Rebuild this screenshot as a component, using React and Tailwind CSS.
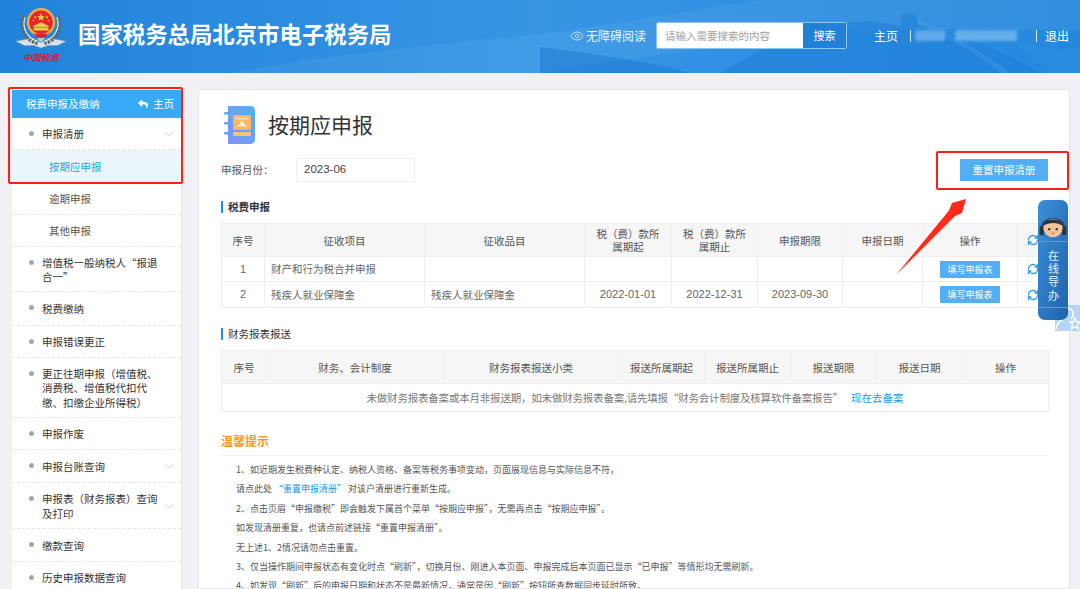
import React from "react";
import { ChevronDown, Eye, RefreshCw } from "lucide-react";
import { FaReply } from "react-icons/fa";

const latin = "font-['Liberation_Sans',sans-serif]";
const LP = "\uFF08";
const RP = "\uFF09";
const CM = "\uFF0C";

function Emblem() {
  return (
    <svg viewBox="0 0 60 50" className="w-[50px] h-[42px] block" aria-hidden="true">
      <path d="M0 41 L20 37 L30 43 L40 37 L60 41 L50 46 L38 46 L30 49 L22 46 L10 46 Z" fill="#dbe4ea" stroke="#8fa3b0" strokeWidth="0.6" />
      <path d="M10 11 A23 23 0 0 0 26 43" fill="none" stroke="#5d6a6c" strokeWidth="5" strokeDasharray="3 1.2" />
      <path d="M50 11 A23 23 0 0 1 34 43" fill="none" stroke="#5d6a6c" strokeWidth="5" strokeDasharray="3 1.2" />
      <path d="M11 12 A22 22 0 0 0 26 41" fill="none" stroke="#e8eef0" strokeWidth="1.4" />
      <path d="M49 12 A22 22 0 0 1 34 41" fill="none" stroke="#e8eef0" strokeWidth="1.4" />
      <circle cx="30" cy="18" r="17" fill="#e9b23c" />
      <circle cx="30" cy="18" r="14" fill="#e4262b" />
      <polygon points="30,7 31.3,10.6 35,10.6 32,12.8 33.1,16.4 30,14.2 26.9,16.4 28,12.8 25,10.6 28.7,10.6" fill="#f6cf4a" />
      <circle cx="23" cy="12" r="1.2" fill="#f6cf4a" />
      <circle cx="37" cy="12" r="1.2" fill="#f6cf4a" />
      <circle cx="21" cy="16" r="1" fill="#f6cf4a" />
      <circle cx="39" cy="16" r="1" fill="#f6cf4a" />
      <path d="M20 23 L30 18 L40 23 L38 24.5 L22 24.5 Z" fill="#f2c84a" />
      <rect x="21" y="25" width="18" height="3" fill="#f2c84a" />
      <path d="M22 32 H38 L35 36 H25 Z" fill="#d8262b" />
      <path d="M25 37 H35 L30 43 Z" fill="#b9c6ce" />
    </svg>
  );
}

function NoteBook() {
  return (
    <svg viewBox="0 0 36 40" className="w-[36px] h-[40px] block" aria-hidden="true">
      <defs>
        <linearGradient id="nb" x1="0" y1="1" x2="1" y2="0">
          <stop offset="0" stopColor="#7f93fb" />
          <stop offset="1" stopColor="#4fb0f5" />
        </linearGradient>
      </defs>
      <path d="M7 1 H29 Q34 1 34 6 V34 Q34 39 29 39 H7 Z" fill="url(#nb)" />
      <rect x="3" y="7" width="6" height="2.6" rx="1.3" fill="#56aaf6" />
      <rect x="3" y="17" width="6" height="2.6" rx="1.3" fill="#63a2f7" />
      <rect x="3" y="27" width="6" height="2.6" rx="1.3" fill="#6f9af8" />
      <rect x="12" y="10" width="18" height="15" rx="1" fill="#fbb45f" />
      <path d="M14.5 21.5 Q18 21 20 16.5 Q21 14.5 22 16.5 Q24 21 27.5 21.5 Z" fill="#fdeed6" />
      <rect x="14.5" y="12.5" width="13" height="2" fill="#fdeed6" opacity="0.7" />
      <rect x="12" y="27" width="18" height="4" rx="1" fill="#fbc27c" />
    </svg>
  );
}

function Mountains() {
  return (
    <svg viewBox="0 0 1080 73" preserveAspectRatio="none" className="absolute inset-0 w-full h-full" aria-hidden="true">
      <path d="M230 73 C 330 55 420 45 520 36 C 600 28 660 14 760 0 L 1080 0 L 1080 30 C 960 30 860 26 780 38 C 700 50 620 60 540 73 Z" fill="#ffffff" opacity="0.06" />
      <path d="M540 47 C 600 55 640 60 690 73 L 540 73 Z" fill="#1b78d2" opacity="0.5" />
      <path d="M720 73 C 760 50 800 28 850 22 C 880 20 890 24 901 26 L 901 14 L 916 14 L 918 24 C 960 34 1000 50 1040 73 Z" fill="#1f80d8" opacity="0.6" />
      <path d="M918 18 C 960 40 990 56 1010 73 L 1000 73 C 975 52 945 36 916 24 Z" fill="#63aeea" opacity="0.2" />
      <path d="M1010 38 C 1040 48 1060 50 1080 48 L 1080 73 L 1050 73 Z" fill="#2c8ee0" opacity="0.7" />
    </svg>
  );
}

function Row({ label, h, sub, active, chevron }) {
  return (
    <div
      className={`relative flex items-center border-b border-dashed border-[#e2e6ea] text-[10.5px] leading-[14.5px] ${active ? "bg-[#ebf5fc] text-[#2aa7dc]" : sub ? "text-[#555555]" : "text-[#333333]"} ${h} ${sub ? "pl-[37px]" : "pl-[30px]"}`}
    >
      {!sub && <span className="absolute left-[17px] top-[13px] w-[5px] h-[5px] rounded-full bg-[#a6a6a6]" />}
      <div className="pt-[2px]">{label}</div>
      {chevron && <ChevronDown size={14} strokeWidth={1} className="absolute right-[5px] top-1/2 -translate-y-1/2 text-[#aaaaaa]" />}
    </div>
  );
}

function Sidebar() {
  return (
    <aside className="w-[170px] ml-[12px] mt-[17px] shrink-0 bg-white border-r border-[#e3e6ea] h-[499px] overflow-hidden">
      <div className="h-[28px] bg-[#36aaf4] text-white text-[10.5px] flex items-center justify-between pl-[14px] pr-[7px]">
        <span>税费申报及缴纳</span>
        <span className="flex items-center gap-[5px]"><FaReply size={10} />主页</span>
      </div>
      <Row h="h-[32px]" label="申报清册" chevron />
      <Row h="h-[33px]" sub active label="按期应申报" />
      <Row h="h-[32px]" sub label="逾期申报" />
      <Row h="h-[32px]" sub label="其他申报" />
      <Row h="h-[45px]" label={<>增值税一般纳税人“报退<br />合一”</>} />
      <Row h="h-[34px]" label="税费缴纳" />
      <Row h="h-[32px]" label="申报错误更正" />
      <Row h="h-[60px]" label={<>{`更正往期申报${LP}增值税、`}<br />消费税、增值税代扣代<br />{`缴、扣缴企业所得税${RP}`}</>} />
      <Row h="h-[32px]" label="申报作废" />
      <Row h="h-[33px]" label="申报台账查询" chevron />
      <Row h="h-[46px]" label={<>{`申报表${LP}财务报表${RP}查询`}<br />及打印</>} chevron />
      <Row h="h-[33px]" label="缴款查询" />
      <Row h="h-[32px]" label="历史申报数据查询" />
    </aside>
  );
}

function SectionTitle({ children, className }) {
  return (
    <div className={`flex items-center gap-[5px] text-[10.5px] text-[#333333] font-bold ${className}`}>
      <span className="w-[2px] h-[12px] bg-[#1890f0]" />
      {children}
    </div>
  );
}

const th = "border border-[#eeeeee] bg-[#f6f6f6] font-normal text-[#555555] text-center leading-[13px] p-0";
const td = "border border-[#eeeeee] text-[#666666] p-0 text-center";

function FillBtn() {
  return <button className="w-[60px] h-[17px] bg-[#55adf3] text-white text-[9px] leading-[17px] rounded-[1px]">填写申报表</button>;
}

function Refresh() {
  return <RefreshCw size={12} strokeWidth={2.6} className="text-[#2f9be8] ml-[9px]" />;
}

function TaxTable() {
  return (
    <table className="table-fixed border-collapse w-[827px] text-[10.5px]">
      <colgroup>
        <col className="w-[43px]" /><col className="w-[160px]" /><col className="w-[160px]" /><col className="w-[87px]" /><col className="w-[86px]" />
        <col className="w-[85px]" /><col className="w-[80px]" /><col className="w-[95px]" /><col className="w-[31px]" />
      </colgroup>
      <thead>
        <tr className="h-[33px]">
          <th className={th}>序号</th><th className={th}>征收项目</th><th className={th}>征收品目</th>
          <th className={th}>{`税${LP}费${RP}款所`}<br />属期起</th><th className={th}>{`税${LP}费${RP}款所`}<br />属期止</th>
          <th className={th}>申报期限</th><th className={th}>申报日期</th><th className={th}>操作</th>
          <th className={th}><Refresh /></th>
        </tr>
      </thead>
      <tbody>
        <tr className="h-[25px]">
          <td className={`${td} ${latin} text-[11px]`}>1</td><td className={`${td} text-left pl-[6px]`}>财产和行为税合并申报</td><td className={td}></td><td className={td}></td><td className={td}></td><td className={td}></td><td className={td}></td>
          <td className={td}><FillBtn /></td><td className={td}><Refresh /></td>
        </tr>
        <tr className="h-[26px]">
          <td className={`${td} ${latin} text-[11px]`}>2</td><td className={`${td} text-left pl-[6px]`}>残疾人就业保障金</td><td className={`${td} text-left pl-[6px]`}>残疾人就业保障金</td>
          <td className={`${td} ${latin} text-[11px]`}>2022-01-01</td><td className={`${td} ${latin} text-[11px]`}>2022-12-31</td><td className={`${td} ${latin} text-[11px]`}>2023-09-30</td><td className={td}></td>
          <td className={td}><FillBtn /></td><td className={td}><Refresh /></td>
        </tr>
      </tbody>
    </table>
  );
}

function ReportTable() {
  return (
    <table className="table-fixed border-collapse w-[827px] text-[10.5px]">
      <colgroup>
        <col className="w-[45px]" /><col className="w-[177px]" /><col className="w-[175px]" /><col className="w-[86px]" /><col className="w-[86px]" />
        <col className="w-[86px]" /><col className="w-[86px]" /><col className="w-[86px]" />
      </colgroup>
      <thead>
        <tr className="h-[33px]">
          {["序号", "财务、会计制度", "财务报表报送小类", "报送所属期起", "报送所属期止", "报送期限", "报送日期", "操作"].map((t) => (
            <th key={t} className={th}>{t}</th>
          ))}
        </tr>
      </thead>
      <tbody>
        <tr className="h-[28px]">
          <td colSpan={8} className={`${td} text-[#777777]`}>
            <span className="tracking-[-0.2px]">{`未做财务报表备案或本月非报送期${CM}如未做财务报表备案,请先填报“财务会计制度及核算软件备案报告”`}</span>
            <span className="text-[#1b9ae6] ml-[8px]">现在去备案</span>
          </td>
        </tr>
      </tbody>
    </table>
  );
}

const notes = [
  <>{`1、如近期发生税费种认定、纳税人资格、备案等税务事项变动${CM}页面展现信息与实际信息不符${CM}`}</>,
  <>请点此处 <span className="text-[#1b9ae6]">“重置申报清册”</span> 对该户清册进行重新生成。</>,
  <>{`2、点击页眉“申报缴税”即会触发下属首个菜单“按期应申报”${CM}无需再点击“按期应申报”。`}</>,
  <>{`如发现清册重复${CM}也请点前述链接“重置申报清册”。`}</>,
  <>无上述1、2情况请勿点击重置。</>,
  <>{`3、仅当操作期间申报状态有变化时点“刷新”${CM}切换月份、刚进入本页面、申报完成后本页面已显示“已申报”等情形均无需刷新。`}</>,
  <>{`4、如发现“刷新”后的申报日期和状态不是最新情况${CM}通常是因“刷新”按钮所查数据同步延时所致。`}</>,
];

function Main() {
  return (
    <main className="w-[872px] ml-[16px] mt-[16px] h-[500px] bg-white border border-[#e6e8eb] pl-[22px] overflow-hidden">
      <div className="flex items-center gap-[11px] pt-[14px] h-[55px]">
        <NoteBook />
        <h1 className="text-[21px] leading-none text-[#333333] font-normal">按期应申报</h1>
      </div>
      <div className="flex items-center w-[827px] mt-[13px] h-[24px] text-[10.5px] text-[#555555]">
        <span className="w-[75px]">{"申报月份\uFF1A"}</span>
        <div className={`w-[119px] h-[24px] border border-[#eeeeee] pl-[7px] text-[11.5px] flex items-center text-[#444444] ${latin}`}>2023-06</div>
        <button className="ml-auto w-[88px] h-[22px] bg-[#55adf3] text-white text-[10.5px]">重置申报清册</button>
      </div>
      <SectionTitle className="mt-[17px] mb-[8px] h-[16px]">税费申报</SectionTitle>
      <TaxTable />
      <SectionTitle className="mt-[18px] mb-[8px] h-[16px] font-normal">财务报表报送</SectionTitle>
      <ReportTable />
      <div className="mt-[21px] text-[12px] font-bold text-[#fb9a1e] h-[16px] leading-[16px]">温馨提示</div>
      <div className="border-t border-[#f2f2f2] mt-[6px] w-[827px] pl-[15px] pt-[4px] text-[9px] text-[#555555] leading-[19.4px]">
        {notes.map((n, i) => <p key={i}>{n}</p>)}
      </div>
    </main>
  );
}

function FloatWidget() {
  return (
    <>
      <div className="absolute left-[1055px] top-[305px] w-[25px] h-[26px] bg-[#b5d5f4]">
        <svg viewBox="0 0 25 26" className="w-full h-full" aria-hidden="true">
          <path d="M1 24 C2 18 6 15 9 14 C6 12 6 6 10 4 C14 2 19 5 18 10 C18 12 17 13 16 14" fill="none" stroke="#ffffff" strokeWidth="1.6" />
          <polygon points="20,13 21.5,17 25,17 22.5,19.5 23.5,24 20,21.5 16.5,24 17.5,19.5 15,17 18.5,17" fill="none" stroke="#ffffff" strokeWidth="1.3" />
        </svg>
      </div>
      <div className="absolute left-[1038px] top-[200px] w-[30px] h-[120px] rounded-[7px] bg-gradient-to-br from-[#3b8fd9] to-[#2163ad] flex flex-col items-center">
        <svg viewBox="1 5 28 22" className="w-[30px] h-[28px] mt-[13px] block" aria-hidden="true">
          <path d="M5 17 C4 6 26 6 25 17" fill="none" stroke="#333c48" strokeWidth="2" />
          <rect x="2.5" y="15" width="4" height="9" rx="2" fill="#2b3340" />
          <rect x="23.5" y="15" width="4" height="9" rx="2" fill="#2b3340" />
          <ellipse cx="15" cy="17" rx="9" ry="8.5" fill="#f3c39a" />
          <path d="M6 15 C7 7 23 7 24 15 C20 12 12 11 6 15 Z" fill="#2c3544" />
          <circle cx="11.5" cy="18" r="1.1" fill="#2c2c2c" />
          <circle cx="18.5" cy="18" r="1.1" fill="#2c2c2c" />
          <path d="M13.5 21.5 Q15 22.8 16.5 21.5" fill="none" stroke="#b55a44" strokeWidth="0.8" />
        </svg>
        <div className="w-full h-[66px] border-t border-[#5d9cd8] pt-[8px] flex justify-center text-[#e8f2fb] text-[11px] tracking-[2.3px] leading-none">
          <span className="[writing-mode:vertical-rl]">在线导办</span>
        </div>
        <div className="w-full border-t border-[#5d9cd8]" />
      </div>
    </>
  );
}

function Annotations() {
  return (
    <>
      <div className="absolute left-[8px] top-[87px] w-[175px] h-[97px] border-2 border-[#ff1f14] rounded-[2px]" />
      <div className="absolute left-[936px] top-[151px] w-[133px] h-[39px] border-2 border-[#ff1f14] rounded-[2px]" />
      <svg viewBox="0 0 1080 589" className="absolute inset-0 w-[1080px] h-[589px] pointer-events-none" aria-hidden="true">
        <polygon points="896,275 949,210.5 952,203 966,199 962,213 955,216" fill="#ff2a1c" />
      </svg>
    </>
  );
}

export default function App() {
  return (
    <div className="relative w-[1080px] h-[589px] overflow-hidden bg-[#eff1f4] font-['Noto_Sans_CJK_SC','Liberation_Sans',sans-serif]">
      <header className="relative h-[73px] bg-gradient-to-r from-[#2183da] via-[#3795e4] to-[#2587dd] text-white flex items-center overflow-hidden">
        <Mountains />
        <div className="relative ml-[16px] flex flex-col items-center w-[50px] -mt-[4px] gap-[4px]">
          <Emblem />
          <span className="text-[9px] leading-[10px] italic font-bold text-[#d3202a] whitespace-nowrap">中国税务</span>
        </div>
        <div className="relative ml-[12px] text-[22.4px] font-bold leading-none -mt-[6px] whitespace-nowrap">国家税务总局北京市电子税务局</div>
        <div className="relative ml-auto mr-[11px] flex items-center text-[12px] -mt-[2px]">
          <Eye size={14} strokeWidth={1.4} className="text-[#d8ecfb]" />
          <span className="ml-[2px] text-[#eaf5fd]">无障碍阅读</span>
          <div className="ml-[10px] flex h-[27px] w-[191px] rounded-[2px] overflow-hidden border border-[#8fc5f0]">
            <div className="flex-1 bg-white text-[#a0a0a0] text-[10.5px] flex items-center pl-[8px]">请输入需要搜索的内容</div>
            <div className="w-[43px] bg-[#2180d8] text-white text-[11px] flex items-center justify-center">搜索</div>
          </div>
          <span className="ml-[27px]">主页</span>
          <span className="ml-[12px] w-px h-[12px] bg-[#d5e9fa]" />
          <div className="ml-[4px] w-[110px] h-[18px] flex items-center gap-[10px] blur-[1.5px]">
            <span className="w-[30px] h-[11px] bg-[#5fa9e8]" />
            <span className="w-[62px] h-[11px] bg-[#64aeea]" />
          </div>
          <span className="ml-[11px] w-px h-[12px] bg-[#d5e9fa]" />
          <span className="ml-[8px]">退出</span>
        </div>
      </header>
      <div className="flex items-start">
        <Sidebar />
        <Main />
      </div>
      <FloatWidget />
      <Annotations />
    </div>
  );
}
